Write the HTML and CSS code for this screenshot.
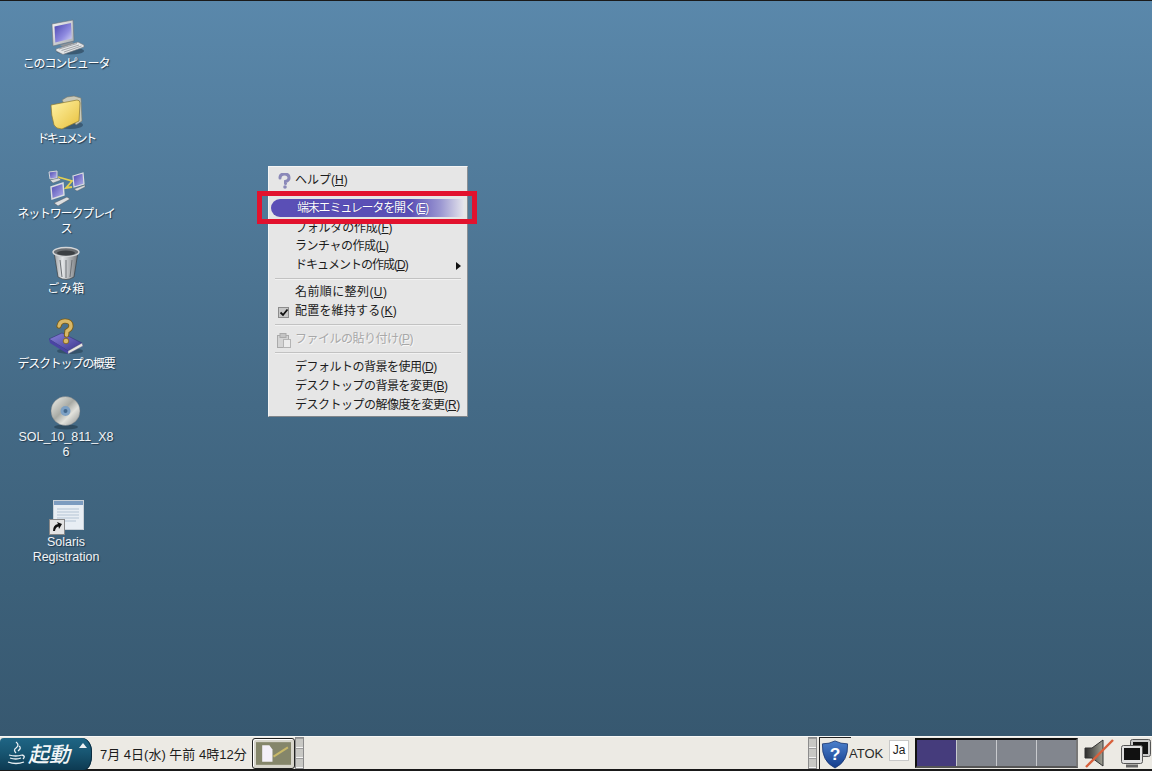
FILE: index.html
```html
<!DOCTYPE html>
<html lang="ja">
<head>
<meta charset="utf-8">
<title>Solaris Desktop</title>
<link rel="stylesheet" href="styles.css">
</head>
<body>
<div class="screen">
  <main class="desktop">
    <div class="icon-col">
      <div class="desk-item">
        <svg class="desk-svg" viewBox="0 0 40 40">
          <defs>
            <linearGradient id="scr" x1="0" y1="0" x2="1" y2="1"><stop offset="0" stop-color="#4a45b0"/><stop offset=".6" stop-color="#8f8be0"/><stop offset="1" stop-color="#d8d8f4"/></linearGradient>
            <linearGradient id="gry" x1="0" y1="0" x2="1" y2="1"><stop offset="0" stop-color="#f4f4f4"/><stop offset="1" stop-color="#a8acb2"/></linearGradient>
          </defs>
          <ellipse cx="24" cy="35" rx="14" ry="3.500" fill="#22384a" opacity=".55"/>
          <path d="M6 8 L27 4 L28 25 L7 30 Z" fill="url(#gry)" stroke="#6a7078" stroke-width=".6"/>
          <path d="M8.500 10.500 L25 7 L25.800 22.500 L9.300 26.500 Z" fill="url(#scr)"/>
          <path d="M14 29 L26 26 L29 28 L18 32 Z" fill="#8d9298"/>
          <path d="M10 33 L32 26 L38 29 L38 31 L17 38.500 L10 35 Z" fill="#e2e4e6" stroke="#70767c" stroke-width=".6"/>
          <path d="M13 33 L31 27.500 M15.500 34.500 L33 29 M18 36 L35.500 30" stroke="#90969c" stroke-width=".8"/>
        </svg>
        <span class="desk-label">このコンピュータ</span>
      </div>
      <div class="desk-item">
        <svg class="desk-svg" viewBox="0 0 40 40">
          <defs><linearGradient id="fold" x1="0" y1="0" x2="1" y2="1"><stop offset="0" stop-color="#fff4a8"/><stop offset="1" stop-color="#e8c03c"/></linearGradient></defs>
          <ellipse cx="24" cy="34" rx="13" ry="4" fill="#22384a" opacity=".5"/>
          <path d="M16 9 L21 6 L28 5 L35 7 L36 30 L30 34 Z" fill="#c8c8b8" stroke="#787868" stroke-width=".6"/>
          <path d="M5 14 L31 9 Q34 9 34 12 L33 30 L16 38 Q10 38 8 34 Q5 24 5 14 Z" fill="url(#fold)" stroke="#8c7a30" stroke-width=".7"/>
        </svg>
        <span class="desk-label desk-label-tight">ドキュメント</span>
      </div>
      <div class="desk-item">
        <svg class="desk-svg" viewBox="0 0 40 40">
          <defs><linearGradient id="scr2" x1="0" y1="0" x2="1" y2="1"><stop offset="0" stop-color="#4a45b0"/><stop offset="1" stop-color="#b8b6ee"/></linearGradient></defs>
          <path d="M12 11 L26 15 L20 22 L26 21" fill="none" stroke="#e4d050" stroke-width="1.800"/>
          <path d="M3 6 L11 5 L11 12 L4 13 Z" fill="url(#scr2)" stroke="#d4d6d8" stroke-width="1"/>
          <path d="M4 14 L13 12 L15 14 L7 17 Z" fill="#d8dadc" stroke="#50565c" stroke-width=".4"/>
          <path d="M27 10 L37 7 L38 18 L28 21 Z" fill="url(#scr2)" stroke="#dcdee0" stroke-width="1.200"/>
          <path d="M28 23 L39 19 L39 21 L31 25 Z" fill="#d8dadc" stroke="#50565c" stroke-width=".4"/>
          <path d="M5 21 L17 17 L18 29 L6 33 Z" fill="url(#scr2)" stroke="#dcdee0" stroke-width="1.400"/>
          <path d="M8 37 L21 31 L24 33 L12 40 Z" fill="#dcdee0" stroke="#50565c" stroke-width=".5"/>
        </svg>
        <span class="desk-label">ネットワークプレイス</span>
      </div>
      <div class="desk-item">
        <svg class="desk-svg" viewBox="0 0 40 40">
          <defs><linearGradient id="can" x1="0" y1="0" x2="1" y2="0"><stop offset="0" stop-color="#9a9ea2"/><stop offset=".35" stop-color="#e4e6e8"/><stop offset="1" stop-color="#74787c"/></linearGradient></defs>
          <path d="M8 11 L12 36 Q20 41 28 36 L32 11 Z" fill="url(#can)" stroke="#3c4044" stroke-width=".7"/>
          <ellipse cx="20" cy="11" rx="13" ry="4.500" fill="#6a6e72" stroke="#d4d6d8" stroke-width="1.400"/>
          <ellipse cx="20" cy="12" rx="9" ry="2.500" fill="#3c4044"/>
          <path d="M14 19 L16 36 M20 19 L20 37 M26 19 L24 36" stroke="#6e7276" stroke-width="1"/>
        </svg>
        <span class="desk-label desk-label-wide">ごみ箱</span>
      </div>
      <div class="desk-item">
        <svg class="desk-svg" viewBox="0 0 40 40">
          <defs><linearGradient id="book" x1="0" y1="0" x2="1" y2="1"><stop offset="0" stop-color="#8a84dc"/><stop offset="1" stop-color="#3a348c"/></linearGradient></defs>
          <ellipse cx="24" cy="35" rx="13" ry="3" fill="#22384a" opacity=".5"/>
          <path d="M3 23 L16 17 L36 27 L22 35 Z" fill="url(#book)" stroke="#2c2870" stroke-width=".5"/>
          <path d="M3 23 L22 35 L22 38 L4 27 Z" fill="#4a44a4"/>
          <path d="M22 35 L36 27 L37 30 L22 38 Z" fill="#e8e6dc" stroke="#5c5890" stroke-width=".5"/>
          <path d="M13 10 Q14 5 19 5 Q25 5 25 10 Q25 13 21 15 L20.500 19" fill="none" stroke="#7c5c14" stroke-width="5.200" stroke-linecap="round"/>
          <path d="M13 10 Q14 5 19 5 Q25 5 25 10 Q25 13 21 15 L20.500 19" fill="none" stroke="#d8b868" stroke-width="3.400" stroke-linecap="round"/>
          <circle cx="20" cy="25" r="2.800" fill="#d8b868" stroke="#7c5c14" stroke-width=".8"/>
        </svg>
        <span class="desk-label">デスクトップの概要</span>
      </div>
      <div class="desk-item">
        <svg class="desk-svg" viewBox="0 0 40 40">
          <defs><linearGradient id="cd" x1="0" y1="0" x2="1" y2="1"><stop offset="0" stop-color="#f4f4ee"/><stop offset=".45" stop-color="#a8aaa4"/><stop offset=".65" stop-color="#e2e2dc"/><stop offset="1" stop-color="#8a8e8e"/></linearGradient></defs>
          <ellipse cx="20" cy="36" rx="12" ry="2.500" fill="#22384a" opacity=".6"/>
          <circle cx="19.500" cy="20" r="14.500" fill="url(#cd)" stroke="#70747a" stroke-width=".4"/>
          <circle cx="19.500" cy="20" r="5" fill="#7ca0c4"/>
          <circle cx="19.500" cy="20" r="2" fill="#44688c"/>
        </svg>
        <span class="desk-label desk-label-latin desk-label-break">SOL_10_811_X86</span>
      </div>
      <div class="desk-item desk-item-gap">
        <svg class="desk-svg" viewBox="0 0 40 40">
          <rect x="7.500" y="4.500" width="30" height="29" fill="#e8eef4" stroke="#c8d0d8"/>
          <rect x="8" y="5" width="29" height="4" fill="#7c9cc0"/>
          <path d="M11 13 H33 M11 16 H33 M11 19 H33 M11 22 H33 M11 25 H30" stroke="#b4c4d4" stroke-width="1.200"/>
          <rect x="3.500" y="23.500" width="15" height="15" fill="#e4e4e4" stroke="#888"/>
          <path d="M7 35 Q7 29 12 28 L11 26 L16 28 L13 33 L12.500 30.500 Q9.500 31 9 35 Z" fill="#111"/>
        </svg>
        <span class="desk-label desk-label-latin">Solaris Registration</span>
      </div>
    </div>

    <nav class="menu">
      <div class="menu-row">
        <span class="menu-icon">
          <svg class="menu-svg" viewBox="0 0 14 16"><path d="M3 5 Q3 1 7.500 1 Q12 1 12 5 Q12 7.500 8.500 8.500 L8.500 10.500" fill="none" stroke="#8a88b8" stroke-width="3" stroke-linecap="round"/><circle cx="8" cy="14" r="1.800" fill="#8a88b8"/></svg>
        </span>
        <span>ヘルプ(<u>H</u>)</span>
      </div>
      <div class="menu-sep menu-sep-blank"></div>
      <div class="menu-row menu-row-active"><span class="menu-icon"></span><span class="sp-n12">端末エミュレータを開く(<u>E</u>)</span></div>
      <div class="menu-row menu-row-pushed"><span class="menu-icon"></span><span class="sp-n3">フォルダの作成(<u>F</u>)</span></div>
      <div class="menu-row"><span class="menu-icon"></span><span class="sp-n5">ランチャの作成(<u>L</u>)</span></div>
      <div class="menu-row"><span class="menu-icon"></span><span class="sp-n10">ドキュメントの作成(<u>D</u>)</span><span class="menu-arrow"></span></div>
      <div class="menu-sep menu-sep-tight"></div>
      <div class="menu-row"><span class="menu-icon"></span><span class="sp-p4">名前順に整列(<u>U</u>)</span></div>
      <div class="menu-row">
        <span class="menu-icon">
          <svg class="menu-svg" viewBox="0 0 14 16"><rect x="1.500" y="3.500" width="10" height="10" fill="#c8c8c8" stroke="#8c8c8c"/><path d="M3.500 8.500 L6 11 L10.500 5.500" fill="none" stroke="#111" stroke-width="1.800"/></svg>
        </span>
        <span class="sp-p2">配置を維持する(<u>K</u>)</span>
      </div>
      <div class="menu-sep"></div>
      <div class="menu-row menu-row-off">
        <span class="menu-icon">
          <svg class="menu-svg" viewBox="0 0 14 16"><rect x="0.500" y="3.500" width="11" height="12" fill="#d4d4d4" stroke="#aaa"/><rect x="3" y="1.500" width="6" height="4" fill="#c4c4c4" stroke="#aaa"/><rect x="6.500" y="7.500" width="7" height="8" fill="#ececec" stroke="#b4b4b4"/></svg>
        </span>
        <span class="sp-n5">ファイルの貼り付け(<u>P</u>)</span>
      </div>
      <div class="menu-sep"></div>
      <div class="menu-row"><span class="menu-icon"></span><span class="sp-n5">デフォルトの背景を使用(<u>D</u>)</span></div>
      <div class="menu-row"><span class="menu-icon"></span><span class="sp-n5">デスクトップの背景を変更(<u>B</u>)</span></div>
      <div class="menu-row"><span class="menu-icon"></span><span class="sp-n5">デスクトップの解像度を変更(<u>R</u>)</span></div>
    </nav>
    <div class="red-mark"></div>
  </main>

  <footer class="panel">
    <button class="start">
      <svg class="java" viewBox="0 0 22 26"><path d="M11 1 Q15 4 11 7 Q8 9 11 12 M14 5 Q17 7 13 10" fill="none" stroke="#e8eef2" stroke-width="1.300"/><path d="M4 14 Q11 16 17 14 M5 17 Q11 19 16 17 M3 21 Q11 24 19 21 M17 14 Q21 15 18 18" fill="none" stroke="#e8eef2" stroke-width="1.300"/></svg>
      <span class="start-text">起動</span>
      <span class="start-arrow"></span>
    </button>
    <span class="clock">7月 4日(水) 午前 4時12分</span>
    <div class="task-btn">
      <svg class="task-svg" viewBox="0 0 34 22">
        <rect width="34" height="22" fill="#85866a"/>
        <path d="M6 3 H13 L16 7 V19 H6 Z" fill="#f4f0f8"/>
        <path d="M17 14 L31 5" stroke="#c8b868" stroke-width="2"/>
      </svg>
    </div>
    <div class="handle"><i></i><i></i><i></i></div>
    <div class="tray">
      <div class="handle"><i></i><i></i><i></i></div>
      <div class="shield-box">
        <svg class="shield" viewBox="0 0 28 30">
          <defs><linearGradient id="sh" x1="0" y1="0" x2="0" y2="1"><stop offset="0" stop-color="#4c80cc"/><stop offset="1" stop-color="#123c8c"/></linearGradient></defs>
          <path d="M14 1 Q20 4 27 4 Q28 22 14 29 Q0 22 1 4 Q8 4 14 1 Z" fill="url(#sh)" stroke="#16326c" stroke-width=".8"/>
          <text class="shield-q" x="14" y="21" text-anchor="middle">?</text>
        </svg>
      </div>
      <span class="atok">ATOK</span>
      <span class="ja">Ja</span>
      <div class="pager"><i class="pager-cell pager-on"></i><i class="pager-cell"></i><i class="pager-cell"></i><i class="pager-cell"></i></div>
      <svg class="speaker" viewBox="0 0 32 32">
        <defs><linearGradient id="spk" x1="0" y1="0" x2="1" y2="0"><stop offset="0" stop-color="#2c2c2c"/><stop offset="1" stop-color="#a0a094"/></linearGradient></defs>
        <path d="M2 11 H9 L20 3 V29 L9 21 H2 Z" fill="url(#spk)" stroke="#333" stroke-width="1"/>
        <path d="M3 30 L30 3" stroke="#d8603c" stroke-width="2.400"/>
      </svg>
      <svg class="monitors" viewBox="0 0 32 30">
        <rect x="10.500" y="1.500" width="20" height="17" rx="2" fill="#c8c8c8" stroke="#555"/>
        <rect x="13" y="4" width="15" height="12" fill="#111"/>
        <rect x="1.500" y="7.500" width="21" height="18" rx="2" fill="#e0e0e0" stroke="#555"/>
        <rect x="4" y="10" width="16" height="12" fill="#111"/>
        <path d="M6 28 H18" stroke="#666" stroke-width="3"/>
      </svg>
    </div>
  </footer>
</div>
</body>
</html>
```
FILE: styles.css
```css
* { box-sizing: border-box; }
html, body { margin: 0; padding: 0; }
body {
  width: 1152px;
  height: 771px;
  overflow: hidden;
  font-family: "Liberation Sans", "Noto Sans CJK JP", sans-serif;
  font-size: 12px;
}
.screen {
  width: 1152px;
  height: 771px;
  display: flex;
  flex-direction: column;
  background: #1a1a1a;
}
.desktop {
  position: relative;
  flex: 1;
  margin-top: 1px;
  background: linear-gradient(180deg, #5a88ab 0%, #4f7897 30%, #446a86 55%, #3c6079 80%, #375870 100%);
}
.icon-col {
  display: flex;
  flex-direction: column;
  width: 100px;
  margin-left: 16px;
  padding-top: 15px;
}
.desk-item {
  height: 75px;
  display: flex;
  flex-direction: column;
  align-items: center;
}
.desk-item-gap { margin-top: 30px; }
.desk-svg { width: 40px; height: 40px; flex: none; }
.desk-label {
  width: 100px;
  margin-top: 1px;
  text-align: center;
  color: #fff;
  line-height: 15px;
  letter-spacing: -1.2px;
  text-shadow: 1px 1px 1px #22384a;
}
.desk-label-tight { letter-spacing: -2.400px; }
.desk-label-wide { letter-spacing: .5px; }
.desk-label-latin { margin-top: -1px; font-size: 12.500px; letter-spacing: 0; color: #f2f4f6; }
.desk-label-break { word-break: break-all; }
.menu {
  position: absolute;
  left: 268px;
  top: 165px;
  width: 200px;
  height: 251px;
  padding: 4px 3px;
  background: #e6e6e6;
  border: 1px solid;
  border-color: #f4f4f4 #8a8f94 #80858a #f4f4f4;
  color: #1c1c1c;
}
.menu-row {
  height: 19px;
  display: flex;
  align-items: center;
  line-height: 19px;
  white-space: nowrap;
  position: relative;
}
.menu-icon {
  width: 23px;
  flex: none;
  display: flex;
  align-items: center;
  padding-left: 5px;
}
.menu-svg { width: 14px; height: 16px; }
.menu-sep {
  height: 2px;
  margin: 3px 3px 4px;
  background: #c2c2c2;
  border-bottom: 1px solid #f2f2f2;
}
.menu-sep-blank { background: #cfcfcf; }
.menu-sep-tight { margin-bottom: 3px; }
.menu-row-active {
  color: #fff;
  height: 18px;
  margin-left: -1px;
  border-radius: 9px 0 0 9px;
  background: linear-gradient(90deg, #5a4fb6 0%, #5a4fb6 72%, #9c98d2 88%, #e6e6ec 100%);
  padding-left: 3px;
  text-shadow: 0 0 1px #2c2680;
}
.menu-row-pushed { margin-top: 2px; height: 18px; }
.menu-row-off { color: #a8a8a8; text-shadow: 1px 1px 0 #f6f6f6; }
.sp-n12 { letter-spacing: -1.200px; }
.sp-n10 { letter-spacing: -1px; }
.sp-n5 { letter-spacing: -.5px; }
.sp-n3 { letter-spacing: -.2px; }
.sp-p2 { letter-spacing: .2px; }
.sp-p4 { letter-spacing: .4px; }
.menu-arrow {
  position: absolute;
  right: 3px;
  top: 6px;
  border-left: 5px solid #111;
  border-top: 4px solid transparent;
  border-bottom: 4px solid transparent;
}
.red-mark {
  position: absolute;
  left: 257px;
  top: 190px;
  width: 220px;
  height: 33px;
  border: 5px solid #e2122e;
}
.panel {
  height: 34px;
  flex: none;
  display: flex;
  align-items: center;
  background: #eceae4;
  border-top: 1px solid #f8f8f6;
  border-bottom: 1px solid #181818;
  margin-bottom: 1px;
  color: #1c1c1c;
}
.start {
  width: 92px;
  height: 32px;
  margin: 1px 0 0;
  padding: 0 0 0 5px;
  display: flex;
  align-items: center;
  position: relative;
  border: 0;
  border-radius: 4px 10px 8px 0 / 4px 14px 14px 0;
  background: linear-gradient(180deg, #1f6585 0%, #185672 45%, #0d3a52 100%);
  box-shadow: inset -1px 0 0 #0a2c40;
  color: #fff;
  font-family: inherit;
}
.java { width: 22px; height: 26px; flex: none; }
.start-text {
  margin-left: 1px;
  font: italic 500 21px/1 "Noto Sans CJK JP", sans-serif;
  color: #f2f6f8;
}
.start-arrow {
  position: absolute;
  right: 5px;
  top: 5px;
  border-bottom: 5px solid #eef2f4;
  border-left: 4px solid transparent;
  border-right: 4px solid transparent;
}
.clock { margin-left: 8px; width: 152px; font-size: 13px; white-space: nowrap; color: #1c1c1c; }
.task-btn {
  width: 43px;
  height: 31px;
  padding: 3px;
  background: #d8d6cc;
  border: 1px solid #222;
  border-radius: 3px;
  box-shadow: inset 1px 1px 0 #fff;
}
.task-svg { display: block; width: 100%; height: 100%; }
.handle {
  width: 9px;
  height: 32px;
  display: flex;
  flex-direction: column;
  flex: none;
  border: 1px solid #8c8c8c;
  background: #c8c8c4;
}
.handle i { flex: 1; border-bottom: 1px solid #f4f4f4; border-top: 1px solid #9c9c9c; }
.tray { margin-left: auto; display: flex; align-items: center; height: 100%; }
.shield-box {
  width: 32px;
  height: 32px;
  margin-left: 2px;
  padding: 2px 0 0 1px;
  border-top: 1px solid #222;
  border-left: 1px solid #222;
}
.shield { display: block; width: 28px; height: 29px; }
.shield-q { font: bold 18px "Liberation Sans", sans-serif; fill: #fff; }
.atok { width: 36px; margin-left: -2px; color: #2a2a2a; font-size: 13px; }
.ja {
  width: 20px;
  height: 21px;
  margin-left: 4px;
  margin-top: -6px;
  background: #fff;
  border: 1px solid #c8c8c8;
  text-align: center;
  line-height: 19px;
  font-size: 12px;
}
.pager {
  width: 163px;
  height: 30px;
  margin-left: 6px;
  display: flex;
  border: 2px solid #111;
  border-right-color: #777;
  border-bottom-color: #555;
  background: #82868e;
}
.pager-cell { flex: 1; border-right: 1px solid #c8cace; background: #82868e; }
.pager-cell:last-child { border-right: 0; }
.pager-on { background: #453c7c; }
.speaker { width: 32px; height: 32px; margin-left: 5px; }
.monitors { width: 32px; height: 30px; margin-left: 5px; }
```
